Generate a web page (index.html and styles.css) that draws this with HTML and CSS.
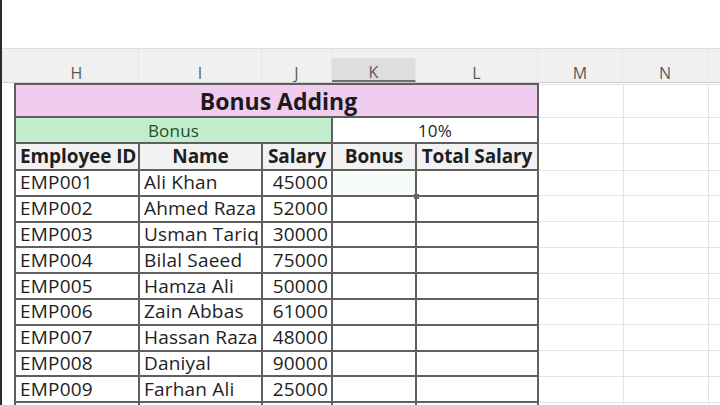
FILE: index.html
```html
<!DOCTYPE html>
<html>
<head>
<meta charset="utf-8">
<link rel="stylesheet" href="styles.css">
</head>
<body>
<div class="screen">
  <div class="topspace"></div>
  <div class="colheads">
    <div class="ch spacer"></div>
    <div class="ch w-h">H</div>
    <div class="ch w-i">I</div>
    <div class="ch w-j">J</div>
    <div class="ch w-k sel">K</div>
    <div class="ch w-l">L</div>
    <div class="ch w-m">M</div>
    <div class="ch w-n">N</div>
    <div class="ch rest"></div>
  </div>
  <table class="sheet">
    <colgroup>
      <col class="c-sp"><col class="c-h"><col class="c-i"><col class="c-j"><col class="c-k"><col class="c-l"><col class="c-m"><col class="c-n"><col class="c-rest">
    </colgroup>
    <tr class="r-title">
      <td class="blank"></td>
      <td class="t title" colspan="5">Bonus Adding</td>
      <td class="g"></td><td class="g"></td><td class="g"></td>
    </tr>
    <tr class="r-bonus">
      <td class="blank"></td>
      <td class="t bonus" colspan="3">Bonus</td>
      <td class="t pct" colspan="2">10%</td>
      <td class="g"></td><td class="g"></td><td class="g"></td>
    </tr>
    <tr class="r-head">
      <td class="blank"></td>
      <td class="t head left">Employee ID</td>
      <td class="t head">Name</td>
      <td class="t head">Salary</td>
      <td class="t head">Bonus</td>
      <td class="t head">Total Salary</td>
      <td class="g"></td><td class="g"></td><td class="g"></td>
    </tr>
    <tr class="r-data">
      <td class="blank"></td><td class="t">EMP001</td><td class="t">Ali Khan</td><td class="t num">45000</td><td class="t active"><span class="handle"></span></td><td class="t"></td>
      <td class="g"></td><td class="g"></td><td class="g"></td>
    </tr>
    <tr class="r-data">
      <td class="blank"></td><td class="t">EMP002</td><td class="t">Ahmed Raza</td><td class="t num">52000</td><td class="t"></td><td class="t"></td>
      <td class="g"></td><td class="g"></td><td class="g"></td>
    </tr>
    <tr class="r-data">
      <td class="blank"></td><td class="t">EMP003</td><td class="t">Usman Tariq</td><td class="t num">30000</td><td class="t"></td><td class="t"></td>
      <td class="g"></td><td class="g"></td><td class="g"></td>
    </tr>
    <tr class="r-data">
      <td class="blank"></td><td class="t">EMP004</td><td class="t">Bilal Saeed</td><td class="t num">75000</td><td class="t"></td><td class="t"></td>
      <td class="g"></td><td class="g"></td><td class="g"></td>
    </tr>
    <tr class="r-data">
      <td class="blank"></td><td class="t">EMP005</td><td class="t">Hamza Ali</td><td class="t num">50000</td><td class="t"></td><td class="t"></td>
      <td class="g"></td><td class="g"></td><td class="g"></td>
    </tr>
    <tr class="r-data">
      <td class="blank"></td><td class="t">EMP006</td><td class="t">Zain Abbas</td><td class="t num">61000</td><td class="t"></td><td class="t"></td>
      <td class="g"></td><td class="g"></td><td class="g"></td>
    </tr>
    <tr class="r-data">
      <td class="blank"></td><td class="t">EMP007</td><td class="t">Hassan Raza</td><td class="t num">48000</td><td class="t"></td><td class="t"></td>
      <td class="g"></td><td class="g"></td><td class="g"></td>
    </tr>
    <tr class="r-data">
      <td class="blank"></td><td class="t">EMP008</td><td class="t">Daniyal</td><td class="t num">90000</td><td class="t"></td><td class="t"></td>
      <td class="g"></td><td class="g"></td><td class="g"></td>
    </tr>
    <tr class="r-data">
      <td class="blank"></td><td class="t">EMP009</td><td class="t">Farhan Ali</td><td class="t num">25000</td><td class="t"></td><td class="t"></td>
      <td class="g"></td><td class="g"></td><td class="g"></td>
    </tr>
    <tr class="r-data">
      <td class="blank"></td><td class="t"></td><td class="t"></td><td class="t num"></td><td class="t"></td><td class="t"></td>
      <td class="g"></td><td class="g"></td><td class="g"></td>
    </tr>
  </table>
</div>
</body>
</html>
```
FILE: styles.css
```css
html, body {
  margin: 0;
  padding: 0;
  width: 720px;
  height: 405px;
  overflow: hidden;
  background: #ffffff;
}
.screen {
  width: 718px;
  height: 405px;
  border-left: 2px solid #2a2a2a;
  font-family: "Open Sans", Lato, sans-serif;
  color: #1e1e1e;
  overflow: hidden;
}
.topspace {
  height: 48px;
  background: #ffffff;
}
.colheads {
  display: flex;
  height: 35px;
  box-sizing: border-box;
  background: #f0f0f0;
  border-top: 1px solid #dddddd;
  border-bottom: 1px solid #cfcfcf;
  align-items: stretch;
}
.ch {
  box-sizing: border-box;
  display: flex;
  align-items: center;
  justify-content: center;
  padding-top: 14px;
  font-size: 16px;
  color: #5a5a5a;
  border-right: 1px solid #e6e6e6;
}
.spacer { width: 13px; border-right: none; }
.w-h { width: 124px; }
.w-i { width: 123px; }
.w-j { width: 70px; }
.w-k { width: 84px; }
.w-l { width: 122px; }
.w-m { width: 85px; }
.w-n { width: 85px; }
.rest { flex: 1; border-right: none; }
.ch.sel {
  margin-top: 9px;
  background: #dedede;
  border-bottom: 2px solid #707070;
  padding-top: 5px;
}

.sheet {
  border-collapse: collapse;
  table-layout: fixed;
  width: 718px;
}
.c-sp { width: 13px; }
.c-h { width: 124px; }
.c-i { width: 123px; }
.c-j { width: 70px; }
.c-k { width: 84px; }
.c-l { width: 122px; }
.c-m { width: 85px; }
.c-n { width: 85px; }
.c-rest { width: 12px; }

td {
  padding: 0 0 0 4px;
  white-space: nowrap;
  overflow: hidden;
  font-size: 19px;
  line-height: 1;
  letter-spacing: 0.2px;
}
td.blank {
  border: none;
  padding: 0;
}
td.g {
  border: 1px solid #e4e4e4;
}
td.t {
  border: 2px solid #5f5f5f;
}
.r-title td { height: 30px; }
.r-bonus td { height: 23px; }
.r-head td { height: 25px; }
.r-data td { height: 23.8px; }

.title {
  background: #f0ccee;
  text-align: center;
  font-weight: 700;
  font-size: 23px;
  letter-spacing: 0;
  color: #1a1a1a;
  padding: 1px 0 0 4px;
}
.bonus {
  background: #c3eecd;
  text-align: center;
  color: #1f4f26;
  font-size: 17px;
  letter-spacing: 0.2px;
  padding: 1px 0 0 0;
}
.pct {
  text-align: center;
  font-size: 17px;
  padding: 1px 0 0 0;
}
.head {
  background: #f2f2f2;
  font-weight: 700;
  text-align: center;
  padding: 0;
  font-size: 19px;
  letter-spacing: -0.1px;
}
.head.left {
  text-align: left;
  padding-left: 4px;
}
.num {
  text-align: right;
  padding: 0 3px 0 0;
}
td.active {
  position: relative;
  overflow: visible;
  background: #f7fcf9;
}
.handle {
  position: absolute;
  right: -4px;
  bottom: -4px;
  width: 5px;
  height: 5px;
  background: #5a6b60;
}
```
